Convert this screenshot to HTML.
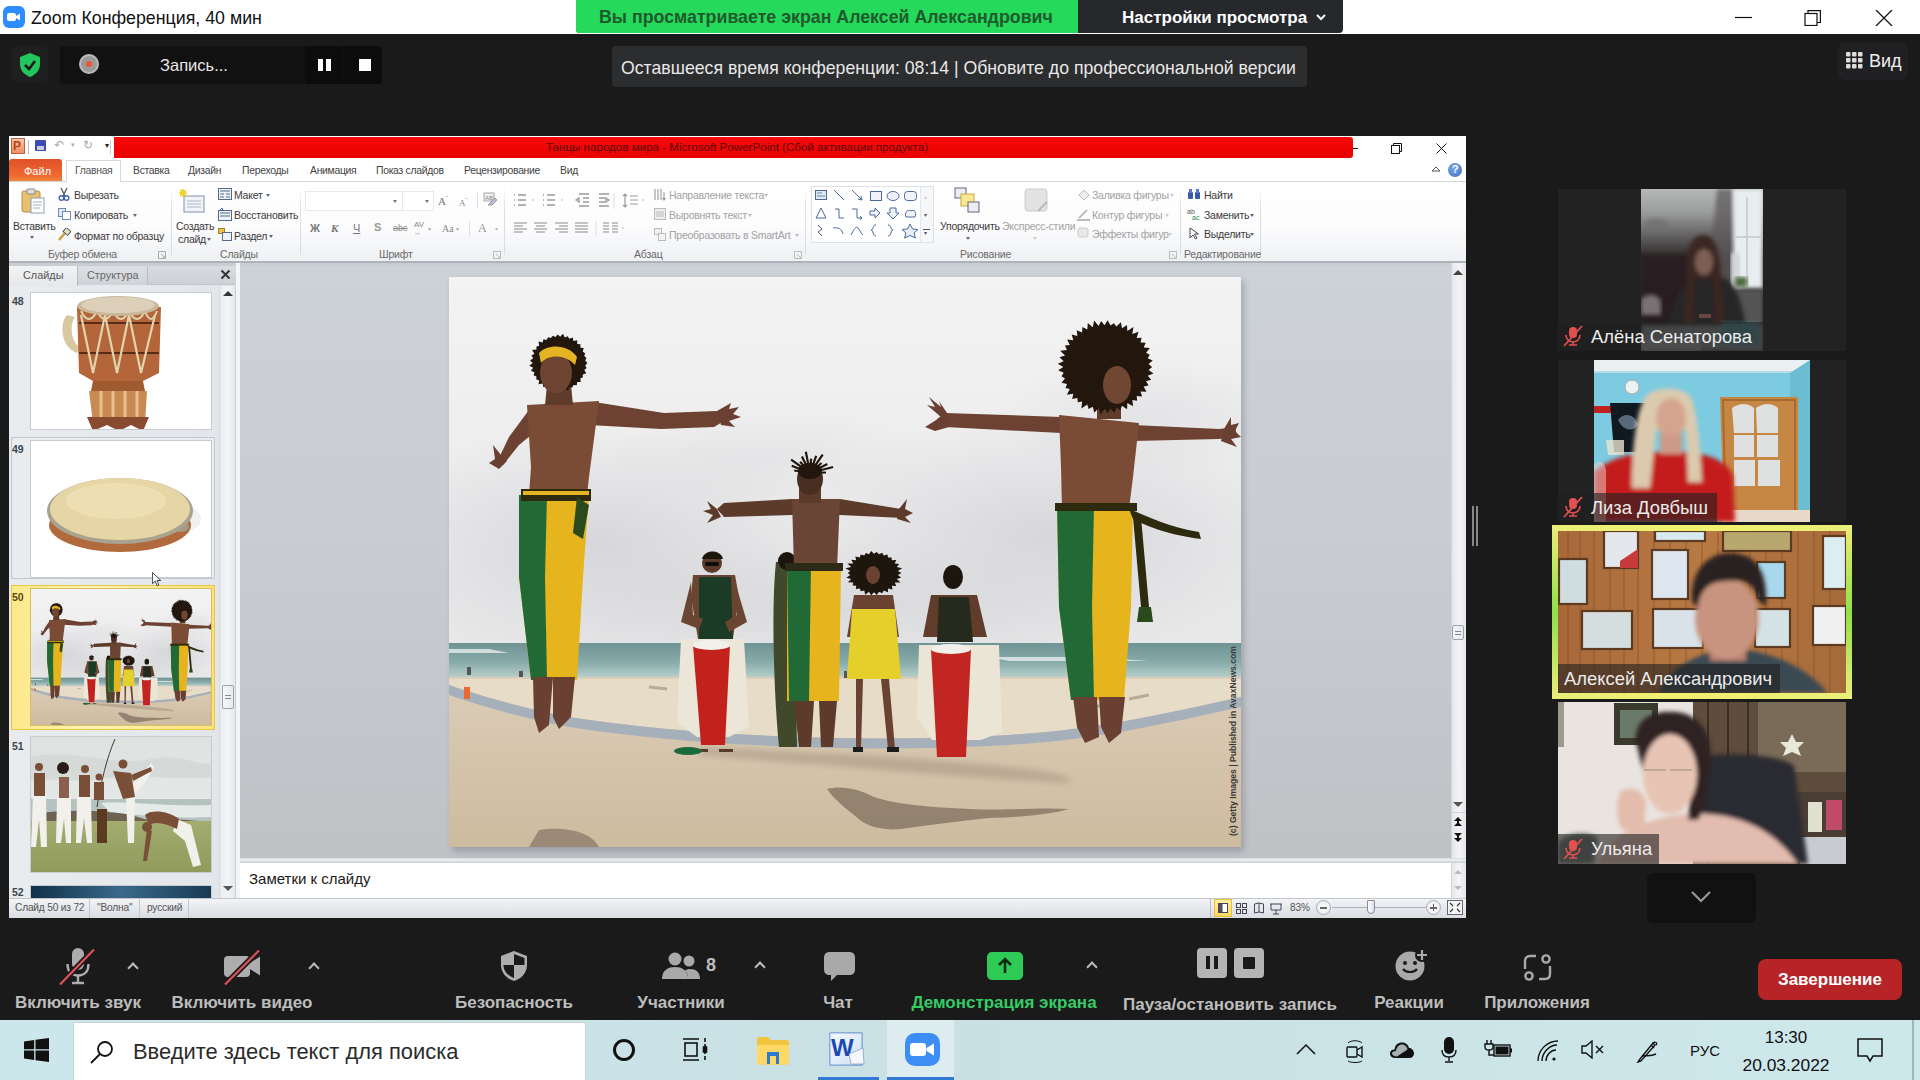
<!DOCTYPE html>
<html><head><meta charset="utf-8">
<style>
*{margin:0;padding:0;box-sizing:border-box}
html,body{width:1920px;height:1080px;overflow:hidden;background:#1a1a1a;font-family:"Liberation Sans",sans-serif}
.a{position:absolute}
.t{position:absolute;white-space:nowrap;line-height:1}
</style></head><body>
<!-- ============ ZOOM TITLE BAR ============ -->
<div class="a" style="left:0;top:0;width:1920px;height:34px;background:#fff"></div>
<div class="a" style="left:3px;top:6px;width:22px;height:22px;border-radius:6px;background:#2d8cff"></div>
<svg class="a" style="left:7px;top:12px" width="14" height="10" viewBox="0 0 14 10"><rect x="0" y="1" width="9" height="8" rx="2" fill="#fff"/><path d="M9 4 L13 1.5 V8.5 L9 6Z" fill="#fff"/></svg>
<div class="t" style="left:31px;top:10px;font-size:17.8px;color:#111">Zoom Конференция, 40 мин</div>

<div class="a" style="left:576px;top:0;width:767px;height:33px;border-radius:0 0 4px 4px;background:#26282c"></div>
<div class="a" style="left:576px;top:0;width:502px;height:33px;border-radius:0 0 0 4px;background:#25d95b"></div>
<div class="t" style="left:599px;top:9px;font-size:17.8px;font-weight:bold;color:#1f5a2c">Вы просматриваете экран Алексей Александрович</div>
<div class="t" style="left:1122px;top:9px;font-size:17px;font-weight:bold;color:#fff">Настройки просмотра</div>
<svg class="a" style="left:1315px;top:13px" width="12" height="8" viewBox="0 0 12 8"><path d="M2 2 L6 6 L10 2" stroke="#fff" stroke-width="2" fill="none"/></svg>

<svg class="a" style="left:1735px;top:10px" width="170" height="16" viewBox="0 0 170 16">
 <path d="M0 7.5 H17" stroke="#111" stroke-width="1.2"/>
 <rect x="70" y="3.5" width="12" height="12" fill="none" stroke="#111" stroke-width="1.2"/>
 <path d="M73 3.5 V0.6 H85.4 V12.5 H82" fill="none" stroke="#111" stroke-width="1.2"/>
 <path d="M141 0 L157 16 M157 0 L141 16" stroke="#111" stroke-width="1.3"/>
</svg>

<!-- ============ TOP CONTROLS ============ -->
<div class="a" style="left:12px;top:46px;width:36px;height:36px;border-radius:6px;background:#1f1f1f"></div>
<svg class="a" style="left:19px;top:52px" width="22" height="26" viewBox="0 0 22 26"><path d="M11 1 L21 5 V12 C21 19 16 23 11 25 C6 23 1 19 1 12 V5Z" fill="#22c55e"/><path d="M6 13 L10 17 L16 9" stroke="#1a1a1a" stroke-width="2.6" fill="none"/></svg>
<div class="a" style="left:60px;top:46px;width:322px;height:38px;border-radius:4px;background:#111"></div>
<div class="a" style="left:306px;top:46px;width:37px;height:38px;background:#0c0c0c"></div>
<div class="a" style="left:344px;top:46px;width:38px;height:38px;border-radius:0 4px 4px 0;background:#0c0c0c"></div>
<div class="a" style="left:79px;top:54px;width:20px;height:20px;border-radius:50%;background:#999;border:2px solid #bbb"></div>
<div class="a" style="left:86px;top:61px;width:6px;height:6px;border-radius:50%;background:#e53"></div>
<div class="t" style="left:160px;top:57px;font-size:16.5px;color:#e6e6e6">Запись...</div>
<div class="a" style="left:318px;top:59px;width:5px;height:12px;background:#fff"></div>
<div class="a" style="left:326px;top:59px;width:5px;height:12px;background:#fff"></div>
<div class="a" style="left:359px;top:59px;width:12px;height:12px;background:#fff"></div>

<div class="a" style="left:612px;top:46px;width:695px;height:41px;border-radius:4px;background:#2c2d2f"></div>
<div class="t" style="left:621px;top:60px;font-size:17.7px;color:#e8e8e8">Оставшееся время конференции: 08:14 | Обновите до профессиональной версии</div>

<div class="a" style="left:1838px;top:42px;width:70px;height:38px;border-radius:8px;background:#202022"></div>
<svg class="a" style="left:1846px;top:52px" width="17" height="17" viewBox="0 0 17 17" fill="#ddd"><rect x="0" y="0" width="4.5" height="4.5" rx="1"/><rect x="6" y="0" width="4.5" height="4.5" rx="1"/><rect x="12" y="0" width="4.5" height="4.5" rx="1"/><rect x="0" y="6" width="4.5" height="4.5" rx="1"/><rect x="6" y="6" width="4.5" height="4.5" rx="1"/><rect x="12" y="6" width="4.5" height="4.5" rx="1"/><rect x="0" y="12" width="4.5" height="4.5" rx="1"/><rect x="6" y="12" width="4.5" height="4.5" rx="1"/><rect x="12" y="12" width="4.5" height="4.5" rx="1"/></svg>
<div class="t" style="left:1869px;top:52px;font-size:18px;color:#eee">Вид</div>

<!-- ============ PPT WINDOW ============ -->

<div class="a" style="left:9px;top:136px;width:1457px;height:782px;background:#fff"></div>
<!-- title row -->
<div class="a" style="left:114px;top:137px;width:1239px;height:21px;border-radius:0 3px 3px 0;background:linear-gradient(#f80a0a,#e80000)"></div>
<div class="t" style="left:546px;top:141px;font-size:11.6px;color:#5a0808">Танцы народов мира  -  Microsoft PowerPoint (Сбой активации продукта)</div>
<div class="a" style="left:11px;top:138px;width:14px;height:16px;border:1px solid #c06040;background:linear-gradient(#f8c8a8,#f09060)"></div>
<div class="t" style="left:13px;top:140px;font-size:12px;font-weight:bold;color:#c04010">P</div>
<div class="a" style="left:28px;top:140px;width:1px;height:14px;background:#bbb"></div>
<div class="a" style="left:35px;top:140px;width:11px;height:11px;background:#3a4ab8;border-radius:1px"></div>
<div class="a" style="left:37px;top:146px;width:7px;height:4px;background:#ccd"></div>
<div class="t" style="left:54px;top:139px;font-size:12px;color:#aaa">↶</div>
<div class="t" style="left:71px;top:141px;font-size:7px;color:#aaa">▾</div>
<div class="t" style="left:83px;top:139px;font-size:12px;color:#aaa">↻</div>
<div class="a" style="left:110px;top:140px;width:1px;height:14px;background:#ccc"></div>
<div class="t" style="left:105px;top:142px;font-size:8px;color:#222">▾</div>
<div class="a" style="left:1353px;top:148px;width:5px;height:1px;background:#111"></div>
<svg class="a" style="left:1391px;top:143px" width="12" height="11" viewBox="0 0 12 11"><rect x="0.5" y="2.5" width="8" height="8" fill="none" stroke="#111"/><path d="M2.5 2.5 V0.5 H10.5 V8.5 H8.5" fill="none" stroke="#111"/></svg>
<svg class="a" style="left:1436px;top:143px" width="11" height="11" viewBox="0 0 11 11"><path d="M0.5 0.5 L10.5 10.5 M10.5 0.5 L0.5 10.5" stroke="#111" stroke-width="1"/></svg>
<!-- tabs row -->
<div class="a" style="left:9px;top:159px;width:53px;height:23px;border-radius:3px 3px 0 0;background:linear-gradient(#e05028,#f06830 70%,#f08a40)"></div>
<div class="t" style="left:24px;top:166px;font-size:11px;color:#fff">Файл</div>
<div class="a" style="left:66px;top:160px;width:55px;height:23px;background:#fff;border:1px solid #d6d8dc;border-bottom:none"></div>
<div class="a" style="left:9px;top:181px;width:1457px;height:1px;background:#d4d7dc"></div>
<div class="a" style="left:67px;top:180px;width:53px;height:3px;background:#fff"></div>
<div class="t" style="left:75px;top:166px;font-size:10.4px;letter-spacing:-0.3px;color:#555">Главная</div>
<div class="t" style="left:133px;top:166px;font-size:10.4px;letter-spacing:-0.3px;color:#444">Вставка</div>
<div class="t" style="left:188px;top:166px;font-size:10.4px;letter-spacing:-0.3px;color:#444">Дизайн</div>
<div class="t" style="left:242px;top:166px;font-size:10.4px;letter-spacing:-0.3px;color:#444">Переходы</div>
<div class="t" style="left:310px;top:166px;font-size:10.4px;letter-spacing:-0.3px;color:#444">Анимация</div>
<div class="t" style="left:376px;top:166px;font-size:10.4px;letter-spacing:-0.3px;color:#444">Показ слайдов</div>
<div class="t" style="left:464px;top:166px;font-size:10.4px;letter-spacing:-0.3px;color:#444">Рецензирование</div>
<div class="t" style="left:560px;top:166px;font-size:10.4px;letter-spacing:-0.3px;color:#444">Вид</div>
<svg class="a" style="left:1431px;top:165px" width="10" height="8" viewBox="0 0 10 8"><path d="M1 6 L5 2 L9 6 H1Z" fill="none" stroke="#555" stroke-width="1"/></svg>
<div class="a" style="left:1448px;top:163px;width:14px;height:14px;border-radius:50%;background:radial-gradient(circle at 40% 35%,#7aa8e8,#3a6cc0)"></div>
<div class="t" style="left:1452px;top:164px;font-size:11px;font-weight:bold;color:#fff">?</div>
<!-- ribbon -->
<div class="a" style="left:9px;top:182px;width:1457px;height:80px;background:linear-gradient(#fff 0%,#fcfcfd 55%,#eef0f3 100%)"></div>
<div class="a" style="left:9px;top:261px;width:1457px;height:2px;background:#aeb3ba"></div>

<style>
.r{position:absolute;white-space:nowrap;line-height:1;font-size:10.5px;letter-spacing:-0.25px;color:#3b3b3b}
.rg{color:#a2a2a2}
.gl{position:absolute;white-space:nowrap;line-height:1;font-size:10.5px;color:#6a6a6a;letter-spacing:-0.2px}
.sep{position:absolute;top:186px;width:1px;height:74px;background:linear-gradient(#fff,#dde0e4 30%,#d8dbe0 90%,#fff)}
.dd{position:absolute;width:0;height:0;border-left:2.5px solid transparent;border-right:2.5px solid transparent;border-top:3px solid #666}
</style>
<!-- clipboard group -->
<svg class="a" style="left:21px;top:188px" width="25" height="26" viewBox="0 0 25 26"><rect x="1" y="3" width="18" height="21" rx="2" fill="#e8c070" stroke="#b8904a"/><rect x="6" y="1" width="8" height="5" rx="1" fill="#ddd" stroke="#888"/><rect x="10" y="10" width="13" height="15" fill="#fff" stroke="#8aa0b8"/><path d="M12 14h9M12 17h9M12 20h7" stroke="#aab" stroke-width="1"/></svg>
<div class="r" style="left:13px;top:221px">Вставить</div>
<div class="dd" style="left:30px;top:236px"></div>
<svg class="a" style="left:58px;top:188px" width="12" height="13" viewBox="0 0 12 13"><path d="M3 0 L7 8 M9 0 L5 8" stroke="#556" stroke-width="1.3"/><circle cx="3.5" cy="10" r="2.3" fill="none" stroke="#4060b0" stroke-width="1.4"/><circle cx="8.5" cy="10" r="2.3" fill="none" stroke="#4060b0" stroke-width="1.4"/></svg>
<div class="r" style="left:74px;top:190px">Вырезать</div>
<svg class="a" style="left:58px;top:208px" width="13" height="12" viewBox="0 0 13 12"><rect x="0.5" y="0.5" width="7" height="8" fill="#dfe8f4" stroke="#6a8ab0"/><rect x="4.5" y="3.5" width="8" height="8" fill="#fff" stroke="#6a8ab0"/></svg>
<div class="r" style="left:74px;top:210px">Копировать</div>
<div class="dd" style="left:133px;top:214px"></div>
<svg class="a" style="left:58px;top:228px" width="13" height="13" viewBox="0 0 13 13"><path d="M1 12 L7 5" stroke="#c8a040" stroke-width="2.5"/><rect x="6" y="1" width="6" height="5" fill="#e8e0c0" stroke="#556" transform="rotate(40 9 3.5)"/></svg>
<div class="r" style="left:74px;top:231px">Формат по образцу</div>
<div class="sep" style="left:171px"></div>
<div class="gl" style="left:48px;top:249px">Буфер обмена</div>
<svg class="a" style="left:158px;top:251px" width="8" height="8" viewBox="0 0 8 8"><path d="M0.5 0.5H7.5V7.5H0.5Z M3 3 L7 7 M7 4.5 V7 H4.5" fill="none" stroke="#aaa" stroke-width="1"/></svg>
<!-- slides group -->
<svg class="a" style="left:178px;top:188px" width="28" height="26" viewBox="0 0 28 26"><rect x="6" y="8" width="20" height="16" fill="#f0f4f8" stroke="#8090a8"/><path d="M9 13h14M9 16h14M9 19h14" stroke="#b0b8c8"/><path d="M5 1 L5 9 M1 5 L9 5 M2 2 L8 8 M8 2 L2 8" stroke="#f0d020" stroke-width="1.6"/></svg>
<div class="r" style="left:176px;top:221px">Создать</div>
<div class="r" style="left:178px;top:234px">слайд</div>
<div class="dd" style="left:207px;top:238px"></div>
<svg class="a" style="left:218px;top:188px" width="14" height="12" viewBox="0 0 14 12"><rect x="0.5" y="0.5" width="13" height="11" fill="#eef2f8" stroke="#556a88"/><path d="M2 3h10M2 6h4M8 6h4M2 9h4M8 9h4" stroke="#556a88"/></svg>
<div class="r" style="left:234px;top:190px">Макет</div>
<div class="dd" style="left:266px;top:194px"></div>
<svg class="a" style="left:218px;top:208px" width="14" height="13" viewBox="0 0 14 13"><rect x="0.5" y="2.5" width="13" height="10" fill="#eef2f8" stroke="#556a88"/><path d="M2 5h10M2 8h10" stroke="#556a88"/><path d="M1 3 L4 0 L5 3" fill="none" stroke="#3a6ab0"/></svg>
<div class="r" style="left:234px;top:210px">Восстановить</div>
<svg class="a" style="left:218px;top:228px" width="14" height="13" viewBox="0 0 14 13"><rect x="0.5" y="0.5" width="6" height="5" fill="#f0c040" stroke="#a08030"/><rect x="4.5" y="4.5" width="9" height="8" fill="#eef2f8" stroke="#556a88"/></svg>
<div class="r" style="left:234px;top:231px">Раздел</div>
<div class="dd" style="left:269px;top:235px"></div>
<div class="sep" style="left:300px"></div>
<div class="gl" style="left:220px;top:249px">Слайды</div>
<!-- font group -->
<div class="a" style="left:305px;top:191px;width:98px;height:20px;border:1px solid #e6e8ec;background:#fff"></div>
<div class="a" style="left:402px;top:191px;width:32px;height:20px;border:1px solid #e6e8ec;background:#fff"></div>
<div class="dd" style="left:393px;top:200px;border-top-color:#777"></div>
<div class="dd" style="left:425px;top:200px;border-top-color:#777"></div>
<div class="t" style="left:438px;top:195px;font-size:11px;font-family:'Liberation Serif',serif;color:#777">A<sup style="font-size:6px">ˆ</sup></div>
<div class="t" style="left:459px;top:197px;font-size:9px;font-family:'Liberation Serif',serif;color:#888">A<sup style="font-size:6px">ˇ</sup></div>
<div class="a" style="left:477px;top:193px;width:1px;height:16px;background:#dde"></div>
<svg class="a" style="left:483px;top:192px" width="15" height="15" viewBox="0 0 15 15"><rect x="1" y="1" width="10" height="8" fill="#eee" stroke="#aaa"/><text x="2" y="8" font-size="6" fill="#888" font-family="Liberation Sans">AB</text><path d="M5 13 L12 6 L14 8 L9 13Z" fill="#c8b8d8" stroke="#999"/></svg>
<div class="t" style="left:310px;top:223px;font-size:11px;font-weight:bold;color:#777">Ж</div>
<div class="t" style="left:331px;top:223px;font-size:11px;font-style:italic;font-weight:bold;font-family:'Liberation Serif',serif;color:#777">К</div>
<div class="t" style="left:353px;top:223px;font-size:11px;text-decoration:underline;color:#777">Ч</div>
<div class="t" style="left:374px;top:222px;font-size:11px;font-weight:bold;color:#999">S</div>
<div class="t" style="left:393px;top:224px;font-size:9px;text-decoration:line-through;color:#888">abc</div>
<div class="t" style="left:414px;top:221px;font-size:8px;color:#888">AV</div>
<div class="t" style="left:414px;top:229px;font-size:7px;color:#999">↔</div>
<div class="t" style="left:428px;top:226px;font-size:6px;color:#aaa">▾</div>
<div class="t" style="left:442px;top:224px;font-size:10px;font-family:'Liberation Serif',serif;color:#888">Aa</div>
<div class="t" style="left:456px;top:226px;font-size:6px;color:#aaa">▾</div>
<div class="a" style="left:469px;top:221px;width:1px;height:16px;background:#dde"></div>
<div class="t" style="left:478px;top:222px;font-size:12px;font-family:'Liberation Serif',serif;color:#999">A</div>
<div class="t" style="left:495px;top:226px;font-size:6px;color:#bbb">▾</div>
<div class="sep" style="left:504px"></div>
<div class="gl" style="left:379px;top:249px">Шрифт</div>
<svg class="a" style="left:493px;top:251px" width="8" height="8" viewBox="0 0 8 8"><path d="M0.5 0.5H7.5V7.5H0.5Z M3 3 L7 7" fill="none" stroke="#bbb" stroke-width="1"/></svg>
<!-- paragraph group -->
<svg class="a" style="left:512px;top:192px" width="140" height="45" viewBox="0 0 140 45" stroke="#9a9a9a" fill="none">
 <path d="M2 3h1M2 8h1M2 13h1M6 3h8M6 8h8M6 13h8" stroke-width="1.4"/>
 <path d="M20 8 l2 0" stroke="#bbb"/>
 <path d="M31 3h1M31 8h1M31 13h1M35 3h8M35 8h8M35 13h8" stroke-width="1.4"/>
 <path d="M49 8 l2 0" stroke="#bbb"/>
 <path d="M67 2h10M71 6h6M71 10h6M67 14h10M64 8 l3 -2 v4z" stroke-width="1.3"/>
 <path d="M87 2h10M87 6h6M87 10h6M87 14h10M97 8 l-3 -2 v4z" stroke-width="1.3"/>
 <path d="M102 1 v16" stroke="#ddd"/>
 <path d="M113 2 v13 M111 4 l2 -2 2 2 M111 13 l2 2 2 -2 M118 4h8M118 8h8M118 12h8" stroke-width="1.2"/>
 <path d="M130 8 l2 0" stroke="#bbb"/>
 <path d="M2 31h13M2 34h9M2 37h13M2 40h9" stroke-width="1.15" stroke="#8a8a8a"/>
 <path d="M22 31h13M24 34h9M22 37h13M24 40h9" stroke-width="1.15" stroke="#8a8a8a"/>
 <path d="M43 31h13M47 34h9M43 37h13M47 40h9" stroke-width="1.15" stroke="#8a8a8a"/>
 <path d="M63 31h13M63 34h13M63 37h13M63 40h13" stroke-width="1.15" stroke="#8a8a8a"/>
 <path d="M84 29 v14" stroke="#ddd"/>
 <path d="M91 31h6M91 34h6M91 37h6M91 40h6M100 31h6M100 34h6M100 37h6M100 40h6" stroke-width="1.15" stroke="#8a8a8a"/>
 <path d="M110 36 l2 0" stroke="#bbb"/>
</svg>
<svg class="a" style="left:654px;top:188px" width="12" height="13" viewBox="0 0 12 13" stroke="#999" fill="none"><path d="M1 1v11M4 1v11M7 1v11M10 4v8M8.5 10 l1.5 2 1.5 -2" stroke-width="1.1"/></svg>
<div class="r rg" style="left:669px;top:190px">Направление текста</div>
<div class="dd" style="left:764px;top:194px;border-top-color:#bbb"></div>
<svg class="a" style="left:654px;top:208px" width="12" height="12" viewBox="0 0 12 12"><rect x="0.5" y="0.5" width="11" height="11" fill="#eee" stroke="#bbb"/><path d="M2 4h8M2 6h8M2 8h8" stroke="#bbb"/></svg>
<div class="r rg" style="left:669px;top:210px">Выровнять текст</div>
<div class="dd" style="left:748px;top:214px;border-top-color:#bbb"></div>
<svg class="a" style="left:654px;top:228px" width="12" height="13" viewBox="0 0 12 13"><rect x="0.5" y="0.5" width="7" height="6" fill="#eee" stroke="#bbb"/><rect x="4.5" y="5.5" width="7" height="7" fill="#f4f4f4" stroke="#bbb"/></svg>
<div class="r rg" style="left:669px;top:230px">Преобразовать в SmartArt</div>
<div class="dd" style="left:795px;top:234px;border-top-color:#bbb"></div>
<div class="sep" style="left:805px"></div>
<div class="gl" style="left:634px;top:249px">Абзац</div>
<svg class="a" style="left:794px;top:251px" width="8" height="8" viewBox="0 0 8 8"><path d="M0.5 0.5H7.5V7.5H0.5Z M3 3 L7 7" fill="none" stroke="#bbb" stroke-width="1"/></svg>
<!-- drawing group -->
<div class="a" style="left:811px;top:186px;width:123px;height:57px;border:1px solid #dde1e6;background:#fff"></div>
<div class="a" style="left:920px;top:187px;width:13px;height:55px;border-left:1px solid #e4e7ea;background:#f6f7f9"></div>
<div class="t" style="left:924px;top:194px;font-size:6px;color:#ccc">▴</div>
<div class="t" style="left:924px;top:212px;font-size:6px;color:#555">▾</div>
<div class="a" style="left:923px;top:229px;width:7px;height:1px;background:#555"></div>
<div class="t" style="left:924px;top:230px;font-size:6px;color:#555">▾</div>
<svg class="a" style="left:813px;top:187px" width="108" height="55" viewBox="0 0 108 55" fill="none" stroke="#4a6a9a" stroke-width="1">
 <rect x="2.5" y="3.5" width="11" height="9" fill="#e0e8f4"/><path d="M4 6h5M4 9h8" stroke="#6688aa"/>
 <path d="M21 3 L31 13"/>
 <path d="M39 3 L49 13 M49 13 l-4 -1 M49 13 l-1 -4"/>
 <rect x="57.5" y="4.5" width="11" height="9" fill="#f0f4fa"/>
 <ellipse cx="80" cy="9" rx="6" ry="4.5" fill="#f0f4fa"/>
 <rect x="91.5" y="4.5" width="12" height="9" rx="3" fill="#f0f4fa"/>
 <path d="M3 31 L8 21 L13 31Z"/>
 <path d="M22 22 H26 V31 H31"/>
 <path d="M39 22 H44 V31 H49 M47 29 l2 2 -2 2"/>
 <path d="M57 24 H62 V21 L67 26 L62 31 V28 H57Z" fill="#f0f4fa"/>
 <path d="M77 21 H83 V26 H86 L80 32 L74 26 H77Z" fill="#f0f4fa"/>
 <path d="M93 30 C91 25 95 22 98 24 C101 22 104 25 102 30Z" fill="#f0f4fa"/>
 <path d="M5 38 L9 42 L5 45 L9 49" stroke="#557"/>
 <path d="M20 41 C25 40 29 42 30 47"/>
 <path d="M38 48 C41 42 43 39 45 41 C47 43 48 47 50 48"/>
 <path d="M63 38 C59 38 61 43 58 43 C61 43 59 49 63 49"/>
 <path d="M75 38 C79 38 77 43 80 43 C77 43 79 49 75 49"/>
 <path d="M97 37 L99.5 42 L105 42.5 L101 46 L102.5 51 L97 48.5 L91.5 51 L93 46 L89 42.5 L94.5 42Z" fill="#e8eef8"/>
</svg>
<svg class="a" style="left:954px;top:187px" width="28" height="27" viewBox="0 0 28 27"><rect x="1" y="1" width="11" height="10" fill="#e8eef4" stroke="#667"/><rect x="7" y="7" width="13" height="12" fill="#f8e890" stroke="#c8a840"/><rect x="14" y="15" width="11" height="10" fill="#e8eef4" stroke="#667"/></svg>
<div class="r" style="left:940px;top:221px">Упорядочить</div>
<div class="dd" style="left:966px;top:237px"></div>
<svg class="a" style="left:1024px;top:188px" width="26" height="26" viewBox="0 0 26 26"><rect x="1" y="1" width="22" height="22" rx="3" fill="#e2e2e2" stroke="#ccc"/><path d="M14 23 L23 14" stroke="#bbb" stroke-width="2"/></svg>
<div class="r rg" style="left:1002px;top:221px">Экспресс-стили</div>
<div class="dd" style="left:1033px;top:237px;border-top-color:#ccc"></div>
<svg class="a" style="left:1077px;top:188px" width="13" height="13" viewBox="0 0 13 13"><path d="M2 7 L7 2 L12 7 L7 12Z" fill="#eee" stroke="#bbb"/></svg>
<div class="r rg" style="left:1092px;top:190px">Заливка фигуры</div>
<div class="dd" style="left:1170px;top:194px;border-top-color:#ccc"></div>
<svg class="a" style="left:1077px;top:208px" width="13" height="13" viewBox="0 0 13 13"><path d="M2 10 L10 2" stroke="#aaa" stroke-width="1.5"/><rect x="0" y="11" width="13" height="2" fill="#bbb"/></svg>
<div class="r rg" style="left:1092px;top:210px">Контур фигуры</div>
<div class="dd" style="left:1165px;top:214px;border-top-color:#ccc"></div>
<svg class="a" style="left:1077px;top:227px" width="13" height="13" viewBox="0 0 13 13"><rect x="1" y="1" width="10" height="9" rx="2" fill="#e8e8e8" stroke="#ccc"/></svg>
<div class="r rg" style="left:1092px;top:229px">Эффекты фигур</div>
<div class="dd" style="left:1168px;top:233px;border-top-color:#ccc"></div>
<div class="sep" style="left:1180px"></div>
<div class="gl" style="left:960px;top:249px">Рисование</div>
<svg class="a" style="left:1169px;top:251px" width="8" height="8" viewBox="0 0 8 8"><path d="M0.5 0.5H7.5V7.5H0.5Z M3 3 L7 7" fill="none" stroke="#bbb" stroke-width="1"/></svg>
<!-- editing group -->
<svg class="a" style="left:1187px;top:188px" width="14" height="12" viewBox="0 0 14 12"><rect x="1" y="4" width="5" height="7" rx="1" fill="#3a5aa8"/><rect x="8" y="4" width="5" height="7" rx="1" fill="#3a5aa8"/><rect x="2" y="1" width="3" height="4" fill="#5a7ac8"/><rect x="9" y="1" width="3" height="4" fill="#5a7ac8"/></svg>
<div class="r" style="left:1204px;top:190px">Найти</div>
<svg class="a" style="left:1187px;top:207px" width="14" height="14" viewBox="0 0 14 14"><text x="0" y="7" font-size="7" fill="#556" font-family="Liberation Sans">ab</text><text x="5" y="13" font-size="7" fill="#2a8a4a" font-family="Liberation Sans">ac</text></svg>
<div class="r" style="left:1204px;top:210px">Заменить</div>
<div class="dd" style="left:1250px;top:214px"></div>
<svg class="a" style="left:1189px;top:227px" width="11" height="13" viewBox="0 0 11 13"><path d="M1 1 L1 11 L4 8 L6.5 12 L8 11 L5.5 7 L9.5 7Z" fill="#fff" stroke="#445"/></svg>
<div class="r" style="left:1204px;top:229px">Выделить</div>
<div class="dd" style="left:1250px;top:233px"></div>
<div class="sep" style="left:1260px"></div>
<div class="gl" style="left:1184px;top:249px">Редактирование</div>




<!-- ============ SLIDES PANE ============ -->
<div class="a" style="left:9px;top:263px;width:1457px;height:3px;background:#c9cdd3"></div>
<div class="a" style="left:9px;top:266px;width:227px;height:632px;background:linear-gradient(90deg,#e9ecef,#e2e5e9)"></div>
<div class="a" style="left:9px;top:266px;width:227px;height:19px;background:linear-gradient(#d9dce1,#cdd1d6);border-bottom:1px solid #c2c6cc"></div>
<div class="a" style="left:9px;top:266px;width:69px;height:20px;background:linear-gradient(#f1f3f5,#e6e9ec);border-right:1px solid #b9bec5"></div>
<div class="a" style="left:78px;top:267px;width:70px;height:18px;background:linear-gradient(#dcdfe3,#cfd3d8);border-right:1px solid #b9bec5"></div>
<div class="t" style="left:23px;top:270px;font-size:10.9px;color:#555">Слайды</div>
<div class="t" style="left:87px;top:270px;font-size:10.9px;color:#666">Структура</div>
<svg class="a" style="left:220px;top:269px" width="11" height="11" viewBox="0 0 11 11"><path d="M1.5 1.5 L9.5 9.5 M9.5 1.5 L1.5 9.5" stroke="#333" stroke-width="2"/></svg>
<div class="a" style="left:219px;top:286px;width:17px;height:612px;background:linear-gradient(90deg,#e8ebee,#f2f4f6 50%,#e6e9ec);border-left:1px solid #d8dce0;border-right:1px solid #c9cdd2"></div>
<div class="a" style="left:223px;top:291px;width:0;height:0;border-left:5px solid transparent;border-right:5px solid transparent;border-bottom:5px solid #333"></div>
<div class="a" style="left:223px;top:886px;width:0;height:0;border-left:5px solid transparent;border-right:5px solid transparent;border-top:5px solid #555"></div>
<div class="a" style="left:222px;top:685px;width:12px;height:24px;border:1px solid #9aa3ad;border-radius:2px;background:linear-gradient(90deg,#f6f7f9,#e6e9ed)"></div>
<div class="a" style="left:225px;top:695px;width:6px;height:1px;background:#888"></div>
<div class="a" style="left:225px;top:698px;width:6px;height:1px;background:#888"></div>
<div class="a" style="left:236px;top:263px;width:4px;height:635px;background:#f4f5f7"></div>
<!-- selection frames -->
<div class="a" style="left:11px;top:437px;width:204px;height:142px;border:1px solid #c4c9cf;background:#eaedf0"></div>
<div class="a" style="left:11px;top:585px;width:204px;height:145px;border:1px solid #e8c840;background:linear-gradient(90deg,#fde88a,#fff3b8 40%,#fde27a)"></div>
<div class="t" style="left:12px;top:296px;font-size:10.5px;font-weight:bold;color:#3c4650">48</div>
<div class="t" style="left:12px;top:444px;font-size:10.5px;font-weight:bold;color:#3c4650">49</div>
<div class="t" style="left:12px;top:592px;font-size:10.5px;font-weight:bold;color:#5a4a10">50</div>
<div class="t" style="left:12px;top:741px;font-size:10.5px;font-weight:bold;color:#3c4650">51</div>
<div class="t" style="left:12px;top:887px;font-size:10.5px;font-weight:bold;color:#3c4650">52</div>
<div id="th48" class="a" style="left:30px;top:292px;width:182px;height:138px;background:#fff;border:1px solid #c8ccd2;overflow:hidden"><svg width="182" height="138" viewBox="0 0 182 138" style="display:block">
 <rect width="182" height="138" fill="#fff"/>
 <path d="M36 22 C28 30 30 55 46 60 L50 55 C40 50 38 32 44 24Z" fill="#d8c8a0"/>
 <path d="M46 14 L130 14 L128 80 L112 88 L62 88 L48 80Z" fill="#b4663a"/>
 <path d="M48 30 L128 30 M48 60 L128 60" stroke="#5a2a18" stroke-width="2"/>
 <path d="M50 22 L62 80 L74 22 L86 80 L98 22 L110 80 L124 22" stroke="#e2d4ac" stroke-width="2.2" fill="none"/>
 <path d="M50 18 Q58 34 66 18 Q74 34 82 18 Q90 34 98 18 Q106 34 114 18 Q120 34 126 18" stroke="#e2d4ac" stroke-width="2" fill="none"/>
 <ellipse cx="87" cy="13" rx="41" ry="10" fill="#c9b79a"/>
 <ellipse cx="87" cy="12" rx="37" ry="8" fill="#ddd0bb"/>
 <path d="M62 88 L112 88 L114 98 L60 98Z" fill="#a05a30"/>
 <path d="M58 98 L116 98 L114 130 L62 130Z" fill="#c98a52"/>
 <path d="M70 98 V128 M82 98 V128 M94 98 V128 M106 98 V128" stroke="#e8c090" stroke-width="3"/>
 <path d="M56 124 L118 124 L112 138 L100 132 L88 138 L76 132 L62 138Z" fill="#8a4a30"/>
</svg></div>
<div id="th49" class="a" style="left:30px;top:440px;width:182px;height:138px;background:#fff;border:1px solid #c8ccd2;overflow:hidden"><svg width="182" height="138" viewBox="0 0 182 138" style="display:block">
 <rect width="182" height="138" fill="#fff"/>
 <ellipse cx="94" cy="78" rx="76" ry="25" fill="#f0f0f0"/>
 <ellipse cx="89" cy="84" rx="71" ry="27" fill="#b06a3c"/>
 <ellipse cx="40" cy="83" rx="8" ry="5" fill="#c8c090"/>
 <ellipse cx="150" cy="86" rx="8" ry="5" fill="#a09a80"/>
 <ellipse cx="89" cy="70" rx="73" ry="33" fill="#a8a290"/>
 <ellipse cx="89" cy="68" rx="70" ry="31" fill="#e6d6a6"/>
 <ellipse cx="85" cy="60" rx="50" ry="18" fill="#efe2b8" opacity="0.7"/>
</svg></div>
<div id="th50" class="a" style="left:30px;top:588px;width:182px;height:138px;background:#ddd;border:1px solid #d8c060;overflow:hidden"><svg width="182" height="138" viewBox="0 0 792 570" preserveAspectRatio="none" style="display:block"><use href="#slideG"/></svg></div>
<div id="th51" class="a" style="left:30px;top:736px;width:182px;height:137px;background:#ccc;border:1px solid #c8ccd2;overflow:hidden"><svg width="182" height="137" viewBox="0 0 182 137" style="display:block">
 <defs><linearGradient id="s51" x1="0" y1="0" x2="0" y2="1"><stop offset="0" stop-color="#dde2e0"/><stop offset="1" stop-color="#eceeec"/></linearGradient>
 <linearGradient id="g51" x1="0" y1="0" x2="0" y2="1"><stop offset="0" stop-color="#a4ac70"/><stop offset="1" stop-color="#8e9a5c"/></linearGradient>
 <filter id="b51"><feGaussianBlur stdDeviation="0.6"/></filter></defs>
 <rect width="182" height="137" fill="url(#s51)"/>
 <path d="M0 20 C40 10 80 30 120 22 C150 16 170 30 182 26 V40 C150 44 110 36 70 42 C40 46 20 40 0 44Z" fill="#d0d6d4" opacity="0.7"/>
 <rect y="62" width="182" height="22" fill="#b4c2c0"/>
 <path d="M70 66 C100 64 140 70 182 68 V80 C150 82 110 78 80 76Z" fill="#e4eae8"/>
 <path d="M10 76 C40 72 80 74 100 78 L120 84 C150 80 170 86 182 84 V90 H10Z" fill="#6e6250"/>
 <rect y="84" width="182" height="53" fill="url(#g51)"/>
 <path d="M84 2 C76 20 70 45 66 70" stroke="#4a3a2a" stroke-width="1" fill="none"/>
 <g filter="url(#b51)">
 <g fill="#f2f0ea">
  <path d="M2 58 L15 58 L16 110 L10 110 L8 82 L5 110 L0 110Z"/>
  <path d="M26 60 L40 60 L40 106 L35 106 L33 82 L30 106 L25 106Z"/>
  <path d="M46 60 L60 60 L61 106 L56 106 L53 82 L50 106 L45 106Z"/>
  <path d="M103 58 L114 46 L123 30 L120 26 L109 40 L98 52Z"/>
  <path d="M95 60 L104 58 L103 106 L97 106Z"/>
  <path d="M146 82 L160 88 L170 128 L162 130 L154 104 L142 94Z"/>
 </g>
 <g fill="#7a5038">
  <circle cx="8" cy="30" r="4"/><path d="M3 36 h11 v23 h-11z"/>
  <circle cx="32" cy="31" r="6" fill="#2a1c14"/><path d="M28 40 h10 v21 h-10z" fill="#8a6050"/>
  <circle cx="54" cy="32" r="4"/><path d="M48 38 h11 v22 h-11z"/>
  <circle cx="68" cy="40" r="3.5"/><path d="M63 45 h10 v18 h-10z"/>
  <circle cx="92" cy="27" r="4.5"/><path d="M82 34 L100 36 L104 60 L92 62Z"/>
  <path d="M100 38 L120 30 L121 34 L102 44Z"/>
  <path d="M114 78 C120 72 138 74 148 82 L146 92 C134 86 124 84 118 88Z"/>
  <circle cx="116" cy="90" r="5"/>
  <path d="M116 92 L112 124 L116 124 L121 94Z"/>
 </g>
 <path d="M66 72 h10 v34 h-10z" fill="#5a3a22"/>
 </g>
</svg></div>
<div class="a" style="left:30px;top:885px;width:182px;height:13px;background:linear-gradient(90deg,#10304a,#3a6a8a 50%,#183a55);border:1px solid #c8ccd2;border-bottom:none"></div>

<svg class="a" style="left:152px;top:572px" width="10" height="15" viewBox="0 0 12 18"><path d="M0.5 0.5 L0.5 14 L3.8 11 L6.2 16.5 L8.2 15.6 L5.9 10.2 L10.5 10.2Z" fill="#fff" stroke="#222" stroke-width="1"/></svg>
<!-- ============ MAIN SLIDE AREA ============ -->
<div class="a" style="left:240px;top:266px;width:1211px;height:593px;background:linear-gradient(#cdd1d8,#c9ccd2 45%,#bfc1c5)"></div>
<div class="a" style="left:452px;top:280px;width:792px;height:571px;background:rgba(90,95,105,0.35);filter:blur(3px)"></div>
<div id="slide" class="a" style="left:449px;top:277px;width:792px;height:570px;background:#eee;overflow:hidden">
<svg width="792" height="570" viewBox="0 0 792 570" style="display:block">
 <defs>
  <linearGradient id="sky" x1="0" y1="0" x2="0" y2="1"><stop offset="0" stop-color="#f3f3f4"/><stop offset="0.45" stop-color="#ebebec"/><stop offset="1" stop-color="#e2e3e4"/></linearGradient>
  <radialGradient id="cl1" cx="0.5" cy="0.5" r="0.5"><stop offset="0" stop-color="#cdced2" stop-opacity="0.68"/><stop offset="1" stop-color="#cdced2" stop-opacity="0"/></radialGradient>
  <linearGradient id="sea" x1="0" y1="0" x2="0" y2="1"><stop offset="0" stop-color="#6f9394"/><stop offset="0.5" stop-color="#86aaa8"/><stop offset="1" stop-color="#c0d4d0"/></linearGradient>
  <linearGradient id="sand" x1="0" y1="0" x2="0" y2="1"><stop offset="0" stop-color="#dccdb8"/><stop offset="1" stop-color="#cdbb9f"/></linearGradient>
  <filter id="bl" x="-20%" y="-20%" width="140%" height="140%"><feGaussianBlur stdDeviation="3"/></filter>
  <filter id="bl1"><feGaussianBlur stdDeviation="0.7"/></filter>
 </defs>
 <g id="slideG">
 <rect width="792" height="570" fill="url(#sky)"/>
 <ellipse cx="150" cy="270" rx="240" ry="120" fill="url(#cl1)"/>
 <ellipse cx="600" cy="260" rx="260" ry="120" fill="url(#cl1)"/>
 <ellipse cx="380" cy="330" rx="300" ry="70" fill="url(#cl1)" opacity="0.8"/>
 <ellipse cx="700" cy="140" rx="160" ry="60" fill="url(#cl1)" opacity="0.5"/>
 <ellipse cx="320" cy="180" rx="160" ry="50" fill="url(#cl1)" opacity="0.4"/>
 <rect x="0" y="366" width="792" height="37" fill="url(#sea)"/>
 <path d="M0 372 H40 L60 376 H0Z M540 380 H640 L700 384 H560Z" fill="#e8eeee" opacity="0.8"/>
 <rect x="0" y="400" width="792" height="170" fill="url(#sand)"/>
 <path d="M0 402 H792 V420 C700 440 650 452 560 458 C420 466 250 460 120 440 C60 428 20 415 0 408Z" fill="#e7dcc8"/>
 <path d="M0 408 C20 415 60 428 120 440 C250 460 420 466 560 458 C650 452 700 440 792 420 V430 C700 450 650 462 560 468 C420 476 250 470 120 450 C60 438 20 425 0 418Z" fill="#a6b0ba"/>
 <path d="M200 410 L218 412 M235 427 L255 430 M268 440 L290 443" stroke="#b9ab96" stroke-width="3"/>
 <path d="M640 430 L660 428 M680 422 L700 418" stroke="#b9ab96" stroke-width="3"/>
 <!-- distant people on beach -->
 <path d="M18 398 h4 v-8 h-4z M70 400 h4 v-6 h-4z M380 400 h3 v-6 h-3z M395 401 h3 v-7 h-3z M415 400 h3 v-5 h-3z" fill="#555"/>
 <rect x="15" y="410" width="6" height="12" fill="#e86a30"/>
 <!-- shadows -->
 <path d="M378 512 C392 508 410 512 425 520 C450 528 480 530 520 532 C560 534 590 530 620 532 C600 538 570 540 540 541 C510 544 480 548 452 552 C430 554 415 548 405 538 C395 530 385 522 378 512Z" fill="#847462" opacity="0.8" filter="url(#bl1)"/>
 <path d="M250 470 C300 472 360 476 420 478 C470 482 520 486 560 490 C600 494 630 500 620 506 C580 504 520 500 470 496 C400 490 320 484 250 478Z" fill="#9a8a76" opacity="0.45" filter="url(#bl)"/>
 <path d="M90 553 C110 550 140 552 150 570 H80Z" fill="#857565" opacity="0.7" filter="url(#bl1)"/>
 <g filter="url(#bl1)">
 <!-- back person green pants -->
 <path d="M327 285 L345 282 L348 470 L330 470 C325 420 322 330 327 285Z" fill="#3f4a2c"/>
 <circle cx="338" cy="284" r="9" fill="#1a120c"/>
 <!-- drummer left -->
 <circle cx="263" cy="286" r="10" fill="#5a3a2a"/><path d="M253 282 C255 272 272 272 274 282Z" fill="#1e1510"/><rect x="256" y="285" width="14" height="4" rx="1.5" fill="#111"/>
 <path d="M244 298 L286 298 L290 320 L283 368 L250 368 L242 320Z" fill="#6a4532"/>
 <path d="M250 300 L282 300 L284 365 L250 365Z" fill="#1f3a26"/>
 <path d="M242 305 L232 345 L250 352 L254 342 L244 338Z" fill="#6a4532"/>
 <path d="M286 305 L298 345 L280 355 L276 345 L288 338Z" fill="#6a4532"/>
 <path d="M232 362 L295 362 L300 450 L280 460 L248 460 L228 445Z" fill="#ece6d8"/>
 <path d="M244 368 L281 368 L276 468 L252 468Z" fill="#c3231f"/>
 <ellipse cx="262.5" cy="368" rx="19" ry="5" fill="#f2f0ea"/>
 <path d="M245 472 h14 v3 h-14z M270 472 h14 v3 h-14z" fill="#5a3a2a"/>
 <ellipse cx="239" cy="474" rx="14" ry="4" fill="#1f6a3a"/>
 <!-- woman in yellow -->
 <path d="M452.5 296.0 L448.8 298.0 L452.2 300.6 L447.8 301.9 L451.5 305.4 L445.7 305.6 L447.3 308.9 L442.8 308.8 L443.5 312.4 L439.1 311.5 L439.0 315.3 L434.7 313.5 L433.2 316.3 L430.0 314.7 L427.9 318.0 L425.0 315.2 L422.1 318.3 L420.0 314.7 L416.2 317.7 L415.3 313.5 L411.8 314.3 L410.9 311.5 L406.9 312.1 L407.2 308.8 L403.7 308.4 L404.3 305.6 L398.9 305.3 L402.2 301.9 L397.4 300.7 L401.2 298.0 L398.8 296.0 L401.2 294.0 L396.5 291.2 L402.2 290.1 L398.4 286.5 L404.3 286.4 L402.3 282.8 L407.2 283.2 L406.3 279.4 L410.9 280.5 L411.7 277.6 L415.3 278.5 L416.9 276.1 L420.0 277.3 L422.1 273.9 L425.0 276.8 L427.7 275.1 L430.0 277.3 L433.2 275.7 L434.7 278.5 L438.4 277.4 L439.1 280.5 L442.5 280.5 L442.8 283.2 L447.3 283.1 L445.7 286.4 L450.1 287.1 L447.8 290.1 L453.1 291.2 L448.8 294.0Z" fill="#1c130d"/>
 <ellipse cx="424" cy="298" rx="7" ry="9" fill="#6a4232"/>
 <path d="M405 318 L444 318 L450 360 L398 360Z" fill="#6a4232"/>
 <path d="M403 332 L446 332 L452 402 L398 402Z" fill="#e5cf2a"/>
 <path d="M407 402 L414 402 L412 472 L407 472Z M432 402 L440 402 L446 472 L439 472Z" fill="#6a4232"/>
 <path d="M404 470 h10 v5 h-10z M438 470 h12 v5 h-12z" fill="#1a1a1a"/>
 <!-- drummer right -->
 <ellipse cx="504" cy="300" rx="10" ry="12" fill="#1e1510"/>
 <path d="M482 318 L528 318 L538 360 L474 360Z" fill="#5e3e2c"/>
 <path d="M490 320 L520 320 L524 365 L488 365Z" fill="#262a1c"/>
 <path d="M470 368 L550 368 L553 455 L532 463 L483 463 L468 440Z" fill="#ebe5d6"/>
 <path d="M482 372 L522 372 L517 480 L488 480Z" fill="#c12520"/>
 <ellipse cx="502" cy="372" rx="20" ry="5" fill="#f2f0ea"/>
 <!-- middle dancer -->
 <path d="M268 232 L275 226 L343 222 L391 222 L452 232 L455 241 L391 238 L343 238 L275 240Z" fill="#5b3a2b"/>
 <path d="M343 222 L391 222 L388 292 L345 292Z" fill="#6a4434"/>
 <path d="M350 204 L372 204 L372 226 L350 226Z" fill="#5b3a2b"/>
 <ellipse cx="361" cy="202" rx="13" ry="16" fill="#4a2e22"/>
 <path d="M361 196 L345.2 193.5 M361 196 L342.7 188.7 M361 196 L342.1 182.7 M361 196 L351.1 184.7 M361 196 L352.9 179.6 M361 196 L356.8 174.7 M361 196 L362.1 181.6 M361 196 L367.2 178.9 M361 196 L373.7 177.7 M361 196 L372.5 186.0 M361 196 L378.3 187.0 M361 196 L384.1 190.0 M361 196 L377.0 195.5" stroke="#22160f" stroke-width="2.2" fill="none"/><ellipse cx="361" cy="194" rx="12" ry="8" fill="#22160f"/>
 <path d="M338 288 L392 288 L390 424 L338 424Z" fill="#e6b41e"/>
 <path d="M338 288 L362 288 L360 424 L340 424Z" fill="#226b34"/>
 <path d="M336 286 H394 V294 H336Z" fill="#2a2a12"/>
 <path d="M345 424 L365 424 L362 470 L350 470Z M370 424 L388 424 L384 470 L372 470Z" fill="#5b3a2b"/>
 <!-- left dancer -->
 <path d="M145 125 L215 136 L268 134 L280 141 L265 150 L212 152 L140 148Z" fill="#6e4331"/>
 <path d="M80 133 L60 160 L48 185 L54 188 L70 168 L92 150Z" fill="#6e4331"/>
 <path d="M78 128 L150 124 L140 200 L138 218 L80 218 L82 190Z" fill="#7a4b35"/>
 <path d="M98 108 L122 108 L124 128 L96 128Z" fill="#5f3a2a"/>
 <path d="M138.4 86.0 L136.2 88.4 L137.6 91.0 L135.3 93.0 L137.3 96.2 L133.7 97.4 L133.9 100.3 L131.3 101.4 L131.8 105.0 L128.2 105.0 L127.8 108.3 L124.5 107.9 L123.2 110.5 L120.3 110.2 L118.9 113.4 L115.8 111.6 L113.7 113.6 L111.2 112.2 L108.7 114.6 L106.5 112.0 L103.8 113.2 L101.9 111.0 L99.0 111.7 L97.6 109.1 L94.2 109.9 L93.6 106.5 L89.6 107.3 L90.2 103.3 L87.3 102.5 L87.4 99.5 L84.6 98.2 L85.4 95.2 L81.9 93.7 L84.2 90.7 L80.3 88.7 L83.7 86.0 L81.1 83.4 L84.2 81.3 L82.4 78.4 L85.4 76.8 L83.1 73.0 L87.4 72.5 L87.5 69.6 L90.2 68.7 L89.5 64.6 L93.6 65.5 L94.4 62.3 L97.6 62.9 L99.0 60.2 L101.9 61.0 L103.8 58.7 L106.5 60.0 L108.7 57.6 L111.2 59.8 L114.0 56.8 L115.8 60.4 L118.7 59.3 L120.3 61.8 L123.7 60.5 L124.5 64.1 L128.2 63.2 L128.2 67.0 L131.5 67.2 L131.3 70.6 L134.8 71.2 L133.7 74.6 L136.1 76.2 L135.3 79.0 L137.4 81.0 L136.2 83.6Z" fill="#22160f"/>
 <ellipse cx="107" cy="96" rx="16" ry="20" fill="#6e4430"/>
 <path d="M90 76 C100 66 120 68 128 80 L126 88 C118 78 100 76 92 86Z" fill="#e4b420"/>
 <path d="M70 218 L140 218 L134 300 L128 403 L82 403 L70 300Z" fill="#e6b41e"/>
 <path d="M70 218 L98 218 L96 300 L98 403 L82 403 L70 300Z" fill="#236b34"/>
 <path d="M72 212 H142 V224 H72Z" fill="#2d2a10"/>
 <path d="M74 214 H140 V218 H74Z" fill="#e4b420"/>
 <path d="M128 220 L140 228 L134 262 L124 256Z" fill="#2a4a1a"/>
 <path d="M84 400 L104 400 L100 448 L90 456 L85 440Z M104 400 L126 400 L122 440 L110 452 L104 440Z" fill="#6a4030"/>
 <!-- right dancer -->
 <path d="M488 142 L496 136 L612 140 L612 156 L496 150 L486 150Z" fill="#6e4331"/>
 <path d="M684 148 L770 152 L786 150 L788 160 L770 162 L684 164Z" fill="#6e4331"/>
 <path d="M610 138 L690 146 L684 200 L680 232 L613 232 L612 190Z" fill="#7a4b35"/>
 <path d="M648 118 L672 118 L672 142 L648 142Z" fill="#5f3a2a"/>
 <path d="M703.1 90.0 L699.6 92.9 L704.5 96.5 L698.7 98.7 L702.2 102.7 L697.1 104.3 L699.5 108.5 L694.7 109.6 L697.4 114.7 L691.5 114.5 L693.1 119.6 L687.7 119.0 L688.1 123.8 L683.3 122.9 L684.1 129.3 L678.3 126.1 L678.1 132.2 L673.0 128.7 L671.3 133.0 L667.3 130.5 L665.3 135.8 L661.5 131.5 L658.7 136.3 L655.5 131.7 L651.9 137.4 L649.6 131.1 L645.3 135.7 L643.8 129.7 L639.6 132.1 L638.3 127.5 L632.4 131.6 L633.1 124.6 L628.8 125.3 L628.4 121.0 L623.2 121.9 L624.3 116.8 L617.9 117.8 L620.8 112.1 L616.5 111.1 L618.0 107.0 L612.6 105.8 L616.0 101.5 L612.5 99.2 L614.7 95.8 L609.2 93.3 L614.3 90.0 L608.8 86.7 L614.7 84.2 L610.5 80.3 L616.0 78.5 L611.2 73.7 L618.0 73.0 L615.9 68.6 L620.8 67.9 L618.1 62.4 L624.3 63.2 L622.7 57.6 L628.4 59.0 L627.7 53.3 L633.1 55.4 L633.4 50.1 L638.3 52.5 L638.8 45.9 L643.8 50.3 L645.1 43.5 L649.6 48.9 L652.1 44.1 L655.5 48.3 L658.7 43.2 L661.5 48.5 L664.9 46.2 L667.3 49.5 L671.9 45.3 L673.0 51.3 L678.0 47.9 L678.3 53.9 L684.5 50.1 L683.3 57.1 L689.5 54.7 L687.7 61.0 L692.6 60.8 L691.5 65.5 L696.7 65.7 L694.7 70.4 L700.8 70.9 L697.1 75.7 L700.7 77.8 L698.7 81.3 L703.7 83.6 L699.6 87.1Z" fill="#22160f"/>
 <ellipse cx="668" cy="108" rx="14" ry="19" fill="#704632"/>
 <path d="M608 228 L684 228 L682 330 L675 423 L622 423 L610 330Z" fill="#e6b41e"/>
 <path d="M608 228 L645 228 L643 330 L645 423 L622 423 L610 330Z" fill="#236b34"/>
 <path d="M606 226 H688 V234 H606Z" fill="#2d2a10"/>
 <path d="M680 232 C700 240 720 250 750 255 L752 262 C720 258 700 250 684 242Z" fill="#2d2a10"/>
 <path d="M684 240 L692 330 L700 330 L692 240Z" fill="#2d2a10"/>
 <path d="M690 330 L702 330 L704 345 L688 345Z" fill="#2a4a1a"/>
 <path d="M624 420 L648 420 L650 460 L636 466 L628 450Z M650 420 L676 420 L672 456 L660 466 L652 450Z" fill="#6a4030"/>

 <path d="M268 134 L282 126 L280 132 L290 130 L284 137 L292 140 L280 144 L286 150 L272 148Z" fill="#6a4030"/>
 <path d="M492 140 L478 128 L486 130 L480 120 L492 130 L490 124 L498 136 L500 150 L486 154 L476 150Z" fill="#6a4030"/>
 <path d="M775 152 L782 140 L782 148 L790 146 L786 154 L792 160 L782 162 L788 170 L772 164Z" fill="#6a4030"/>
 <path d="M52 178 L44 168 L46 182 L40 186 L50 192 L58 184Z" fill="#6a4030"/>
 <path d="M268 232 L258 224 L262 232 L254 234 L264 238 L258 246 L272 240Z" fill="#5b3a2b"/>
 <path d="M450 232 L458 222 L456 232 L464 236 L456 240 L462 246 L448 242Z" fill="#5b3a2b"/>
 </g>
 <text transform="translate(786.5 559) rotate(-90)" font-family="Liberation Sans" font-size="8.6" font-weight="bold" fill="#3a3a3a">(c) Getty Images | Published in AvaxNews.com</text>
 </g>
</svg>
</div>
<!-- right scrollbar -->
<div class="a" style="left:1451px;top:263px;width:15px;height:596px;background:linear-gradient(90deg,#e4e7eb,#f3f4f6 50%,#e4e7eb);border-left:1px solid #d2d6db"></div>
<div class="a" style="left:1453px;top:270px;width:0;height:0;border-left:5px solid transparent;border-right:5px solid transparent;border-bottom:5px solid #444"></div>
<div class="a" style="left:1453px;top:802px;width:0;height:0;border-left:5px solid transparent;border-right:5px solid transparent;border-top:5px solid #555"></div>
<div class="a" style="left:1452px;top:625px;width:12px;height:15px;border:1px solid #9aa3ad;border-radius:2px;background:linear-gradient(90deg,#f6f7f9,#e6e9ed)"></div>
<div class="a" style="left:1455px;top:631px;width:6px;height:1px;background:#888"></div>
<div class="a" style="left:1455px;top:634px;width:6px;height:1px;background:#888"></div>
<div class="a" style="left:1451px;top:812px;width:15px;height:1px;background:#d2d6db"></div>
<svg class="a" style="left:1453px;top:816px" width="10" height="28" viewBox="0 0 10 28" fill="#111"><path d="M1 5 L5 1 L9 5Z M1 10 L5 6 L9 10Z"/><rect x="4" y="5" width="2" height="5"/><path d="M1 17 L5 21 L9 17Z M1 22 L5 26 L9 22Z"/><rect x="4" y="17" width="2" height="5"/></svg>
<!-- notes -->
<div class="a" style="left:240px;top:858px;width:1226px;height:5px;background:linear-gradient(#d6d9de,#eef0f2 40%,#c7cbd1)"></div>
<div class="a" style="left:240px;top:863px;width:1211px;height:35px;background:#fff"></div>
<div class="t" style="left:249px;top:871px;font-size:15px;color:#1a1a1a">Заметки к слайду</div>
<div class="a" style="left:1451px;top:863px;width:15px;height:35px;background:linear-gradient(90deg,#e4e7eb,#f3f4f6 50%,#e4e7eb);border-left:1px solid #d2d6db"></div>
<div class="a" style="left:1454px;top:870px;width:0;height:0;border-left:4px solid transparent;border-right:4px solid transparent;border-bottom:4px solid #bbb"></div>
<div class="a" style="left:1454px;top:886px;width:0;height:0;border-left:4px solid transparent;border-right:4px solid transparent;border-top:4px solid #bbb"></div>
<!-- status bar -->
<div class="a" style="left:9px;top:898px;width:1457px;height:20px;background:linear-gradient(#f3f4f6,#e3e6ea 60%,#d9dce1);border-top:1px solid #c2c6cc"></div>
<div class="t" style="left:15px;top:903px;font-size:10.2px;letter-spacing:-0.2px;color:#555">Слайд 50 из 72</div>
<div class="a" style="left:89px;top:899px;width:1px;height:19px;background:#c4c8ce"></div>
<div class="t" style="left:97px;top:903px;font-size:10.2px;letter-spacing:-0.2px;color:#555">"Волна"</div>
<div class="a" style="left:139px;top:899px;width:1px;height:19px;background:#c4c8ce"></div>
<div class="t" style="left:147px;top:903px;font-size:10.2px;letter-spacing:-0.2px;color:#555">русский</div>
<div class="a" style="left:188px;top:899px;width:1px;height:19px;background:#c4c8ce"></div>
<div class="a" style="left:1210px;top:899px;width:1px;height:19px;background:#b8bcc2"></div>
<div class="a" style="left:1214px;top:899px;width:18px;height:18px;border:1px solid #e8c040;background:linear-gradient(#fff0a0,#fcd860)"></div>
<svg class="a" style="left:1216px;top:901px" width="70" height="14" viewBox="0 0 70 14" fill="none" stroke="#445">
 <rect x="2.5" y="2.5" width="9" height="9" fill="#fff"/><rect x="3" y="3" width="3" height="8" fill="#556"/>
 <rect x="20.5" y="2.5" width="4" height="4"/><rect x="26.5" y="2.5" width="4" height="4"/><rect x="20.5" y="8.5" width="4" height="4"/><rect x="26.5" y="8.5" width="4" height="4"/>
 <path d="M38.5 3 L43 2 L47.5 3 V12 L43 11 L38.5 12Z M43 2 V11"/>
 <path d="M54 3 H66 M55 3 V9 H65 V3 M60 9 V13 M57 13 H63"/>
</svg>
<div class="t" style="left:1290px;top:903px;font-size:10px;color:#555">83%</div>
<div class="a" style="left:1316px;top:900px;width:15px;height:15px;border-radius:50%;border:1px solid #aab;background:radial-gradient(#fff,#e4e7ea)"></div>
<div class="a" style="left:1320px;top:907px;width:7px;height:1.5px;background:#666"></div>
<div class="a" style="left:1332px;top:907px;width:94px;height:1px;background:#b0b4ba"></div>
<div class="a" style="left:1367px;top:900px;width:8px;height:14px;border:1px solid #889;border-radius:1px 1px 4px 4px;background:linear-gradient(90deg,#fff,#dde)"></div>
<div class="a" style="left:1426px;top:900px;width:15px;height:15px;border-radius:50%;border:1px solid #aab;background:radial-gradient(#fff,#e4e7ea)"></div>
<div class="a" style="left:1430px;top:907px;width:7px;height:1.5px;background:#666"></div>
<div class="a" style="left:1432.8px;top:904px;width:1.5px;height:7px;background:#666"></div>
<svg class="a" style="left:1447px;top:900px" width="16" height="15" viewBox="0 0 16 15"><rect x="0.5" y="0.5" width="15" height="14" fill="#f4f5f7" stroke="#667"/><path d="M3 3 L6 6 M13 3 L10 6 M3 12 L6 9 M13 12 L10 9" stroke="#333" stroke-width="1.2"/></svg>

<!-- ============ PARTICIPANTS ============ -->

<style>
.nm{position:absolute;white-space:nowrap;line-height:1;font-size:18.4px;color:#ececec}
.lb{position:absolute;background:rgba(32,32,32,0.6)}
</style>
<!-- splitter -->
<div class="a" style="left:1472px;top:506px;width:2px;height:40px;background:#888"></div>
<div class="a" style="left:1476px;top:506px;width:2px;height:40px;background:#888"></div>
<!-- tile 1 Alena -->
<div class="a" style="left:1558px;top:189px;width:288px;height:162px;background:#222"></div>
<svg class="a" style="left:1641px;top:189px" width="122" height="162" viewBox="0 0 122 162">
 <defs><linearGradient id="al1" x1="0" y1="0" x2="0" y2="1"><stop offset="0" stop-color="#b6b8b8"/><stop offset="0.14" stop-color="#9c9e9e"/><stop offset="0.3" stop-color="#5e5c5c"/><stop offset="0.42" stop-color="#2e2a2a"/><stop offset="1" stop-color="#242020"/></linearGradient>
 <filter id="vb"><feGaussianBlur stdDeviation="2"/></filter></defs>
 <rect width="122" height="162" fill="url(#al1)"/>
 <path d="M0 66 H60 V162 H0Z" fill="#2a1e20" opacity="0.85" filter="url(#vb)"/>
 <path d="M76 0 L92 0 L92 150 L70 150 L70 60Z" fill="#5e5a5c" opacity="0.75" filter="url(#vb)"/>
 <path d="M92 0 H122 V100 H92Z" fill="#e8eef0" filter="url(#vb)"/>
 <path d="M106 8 V98 M92 48 H122" stroke="#c4c8cc" stroke-width="1.5"/>
 <path d="M90 64 H99 V100 H90Z" fill="#d0d6d8" filter="url(#vb)"/>
 <path d="M94 88 H106 V98 H94Z" fill="#4a6a3a" filter="url(#vb)"/>
 <path d="M92 100 H122 V162 H92Z" fill="#545454" filter="url(#vb)"/>
 <path d="M0 110 C6 104 16 104 20 112 L20 126 L0 126Z" fill="#9a9696" opacity="0.7" filter="url(#vb)"/>
 <ellipse cx="16" cy="36" rx="12" ry="7" fill="#707070" opacity="0.7" filter="url(#vb)"/>
 <g filter="url(#vb)">
 <path d="M24 162 C26 120 40 92 58 88 L80 88 C96 92 104 120 108 162Z" fill="#262628"/>
 <path d="M46 90 C44 62 50 46 62 46 C74 46 80 62 80 90 L84 140 L74 140 L72 90 L54 90 L52 140 L42 140Z" fill="#3a2822"/>
 <ellipse cx="63" cy="73" rx="9" ry="13" fill="#7e5e54"/>
 </g>
 <path d="M58 125 h12 v4 h-12z" fill="#b06060" opacity="0.5"/>
 <path d="M0 136 H122 V162 H0Z" fill="#7a7e80" filter="url(#vb)"/>
 <path d="M80 134 H118 V156 H80Z" fill="#4a8088" filter="url(#vb)"/>
 <path d="M0 150 H60 V162 H0Z" fill="#9a9c9c" opacity="0.6"/>
</svg>
<div class="lb" style="left:1558px;top:322px;width:205px;height:29px"></div>
<svg class="a" style="left:1562px;top:325px" width="22" height="22" viewBox="0 0 22 22"><rect x="7" y="2" width="8" height="11" rx="4" fill="#e25050"/><path d="M4 10 C4 15 8 17 11 17 C14 17 18 15 18 10 M11 17 V20 M7 20 H15" stroke="#e25050" stroke-width="1.6" fill="none"/><path d="M2 21 L20 1" stroke="#e25050" stroke-width="1.8"/></svg>
<div class="nm" style="left:1591px;top:328px">Алёна Сенаторова</div>

<!-- tile 2 Liza -->
<div class="a" style="left:1558px;top:360px;width:288px;height:162px;background:#222"></div>
<svg class="a" style="left:1594px;top:360px" width="216" height="162" viewBox="0 0 216 162">
 <rect width="216" height="162" fill="#7ccbe0"/>
 <rect width="216" height="13" fill="#eaf0f2"/>
 <rect y="11" width="216" height="2" fill="#b8dce6"/>
 <path d="M196 13 L216 0 V162 H196Z" fill="#6cbcd2"/>
 <circle cx="38" cy="27" r="7" fill="#eef2f2" stroke="#aaa" stroke-width="1"/>
 <path d="M0 46 H17 V53 H0Z" fill="#c02222"/>
 <path d="M16 43 H54 V92 H20Z" fill="#101820"/>
 <path d="M24 60 C30 52 40 54 44 64 C40 72 30 72 24 60Z" fill="#8aa0b8" opacity="0.6"/>
 <path d="M12 80 H30 V95 H14Z" fill="#e8e4d0" opacity="0.8"/>
 <path d="M126 37 H204 V162 H130Z" fill="#c68644"/>
 <path d="M129 40 H201 V162 H132Z" fill="none" stroke="#a86a30" stroke-width="2"/>
 <g fill="#dfe1e0">
  <path d="M138 48 Q150 40 160 48 V73 H140Z"/><path d="M162 48 Q174 40 184 48 V73 H163Z"/>
  <rect x="140" y="75" width="20" height="22"/><rect x="163" y="75" width="21" height="22"/>
  <rect x="140" y="100" width="21" height="26"/><rect x="164" y="100" width="22" height="26"/>
 </g>
 <path d="M128 150 H216 V162 H128Z" fill="#e8d8c8"/>
 <g filter="url(#vb)">
 <path d="M0 162 L0 112 C15 98 40 92 62 92 L92 92 C115 94 132 100 139 116 L141 162Z" fill="#c41f1f"/>
 <path d="M38 128 C38 90 42 50 52 36 C62 26 86 26 96 36 C104 50 106 90 108 122 L94 122 L92 70 L62 70 L56 128Z" fill="#dccaae"/>
 <ellipse cx="77" cy="58" rx="15" ry="20" fill="#d6a48e"/>
 <path d="M66 74 h22 v20 h-22z" fill="#cc9a86"/>
 </g>
 <path d="M0 105 C5 100 10 100 12 110 L12 162 H0Z" fill="#e8d8d0" opacity="0.5"/>
</svg>
<div class="lb" style="left:1558px;top:493px;width:159px;height:29px"></div>
<svg class="a" style="left:1562px;top:496px" width="22" height="22" viewBox="0 0 22 22"><rect x="7" y="2" width="8" height="11" rx="4" fill="#e25050"/><path d="M4 10 C4 15 8 17 11 17 C14 17 18 15 18 10 M11 17 V20 M7 20 H15" stroke="#e25050" stroke-width="1.6" fill="none"/><path d="M2 21 L20 1" stroke="#e25050" stroke-width="1.8"/></svg>
<div class="nm" style="left:1591px;top:499px">Лиза Довбыш</div>

<!-- tile 3 Alexey (active) -->
<div class="a" style="left:1552px;top:525px;width:300px;height:174px;background:linear-gradient(90deg,#e8ee78,#f0f070 40%,#f0f070 60%,#e8ee78);"></div>
<div class="a" style="left:1552px;top:531px;width:300px;height:162px;background:linear-gradient(#e6ec74,#90e048 50%,#e6ec74)"></div>
<svg class="a" style="left:1558px;top:531px" width="288" height="162" viewBox="0 0 288 162">
 <defs><linearGradient id="wd" x1="0" y1="0" x2="1" y2="0"><stop offset="0" stop-color="#a8683a"/><stop offset="0.5" stop-color="#b87a44"/><stop offset="1" stop-color="#a66a3a"/></linearGradient></defs>
 <rect width="288" height="162" fill="url(#wd)"/>
 <g stroke="#8a4e26" stroke-width="1.2" opacity="0.6">
  <path d="M10 0V162M22 0V162M36 0V162M52 0V162M66 0V162M80 0V162M96 0V162M112 0V162M128 0V162M144 0V162M160 0V162M176 0V162M192 0V162M208 0V162M224 0V162M240 0V162M256 0V162M272 0V162"/>
 </g>
 <g stroke="#5e3a20" stroke-width="2.2">
 <rect x="1" y="28" width="28" height="45" fill="#cfdce0"/>
 <rect x="46" y="0" width="34" height="37" fill="#e4e8ec"/>
 <path d="M62 30 L80 18 V37 H62Z" fill="#c83a3a" stroke="none"/>
 <rect x="97" y="0" width="50" height="10" fill="#d8eaf0"/>
 <rect x="94" y="19" width="36" height="49" fill="#dce6f0"/>
 <rect x="24" y="80" width="50" height="38" fill="#d4dede"/>
 <rect x="95" y="78" width="50" height="39" fill="#d8e2e8"/>
 <rect x="165" y="0" width="68" height="20" fill="#b8a870"/>
 <rect x="199" y="31" width="28" height="36" fill="#a8d8ec"/>
 <rect x="197" y="78" width="35" height="38" fill="#d4e2e6"/>
 <rect x="265" y="5" width="23" height="53" fill="#dceef4"/>
 <rect x="255" y="75" width="33" height="39" fill="#f0f0f0"/>
 </g>
 <g filter="url(#vb)">
 <path d="M100 162 C115 130 150 120 170 118 C200 118 240 128 270 162Z" fill="#3b4a52"/>
 <path d="M152 110 h36 v20 h-36z" fill="#b88070"/>
 <ellipse cx="169" cy="88" rx="32" ry="40" fill="#c89480"/>
 <path d="M134 70 C132 40 150 22 172 22 C198 22 210 40 208 75 L200 70 C198 55 190 48 172 50 C150 50 142 58 140 78Z" fill="#2a2220"/>
 </g>
</svg>
<div class="lb" style="left:1558px;top:664px;width:222px;height:29px"></div>
<div class="nm" style="left:1564px;top:670px">Алексей Александрович</div>

<!-- tile 4 Ulyana -->
<div class="a" style="left:1558px;top:702px;width:288px;height:162px;background:#222"></div>
<svg class="a" style="left:1558px;top:702px" width="288" height="162" viewBox="0 0 288 162">
 <rect width="288" height="162" fill="#e9e4e0"/>
 <path d="M135 0 H288 V162 H135Z" fill="#5e4c3c"/>
 <path d="M200 0 H288 V70 H200Z" fill="#7a6a58"/>
 <path d="M150 0 V162 M170 0 V120 M190 0 V120" stroke="#3a2e24" stroke-width="2"/>
 <path d="M0 0 H6 V45 H0Z" fill="#9a9a90"/>
 <rect x="56" y="1" width="44" height="42" fill="#3a3a2c"/>
 <rect x="62" y="8" width="32" height="28" fill="#6a7a6a"/>
 <path d="M230 40 l4 -8 4 8 8 0 -6 6 3 8 -9 -4 -9 4 3 -8 -6 -6z" fill="#e8e8d8"/>
 <path d="M240 90 h48 v72 h-48z" fill="#4a3e34"/>
 <path d="M250 100 h14 v30 h-14z" fill="#e0e0d0"/>
 <path d="M268 98 h16 v30 h-16z" fill="#c04a6a"/>
 <path d="M242 135 h46 v27 h-46z" fill="#c8ccd0"/>
 <g filter="url(#vb)">
 <path d="M140 56 C150 50 220 50 236 64 L250 162 H150Z" fill="#2c2c30"/>
 <path d="M40 162 C50 132 90 116 130 112 C170 110 210 120 240 162Z" fill="#e2bcae"/>
 <path d="M78 40 C76 16 96 8 118 10 C140 12 156 30 152 64 C150 90 146 110 140 118 L130 118 L136 60 L96 60 L88 80Z" fill="#2e2424"/>
 <ellipse cx="112" cy="72" rx="27" ry="40" fill="#e8c4b4"/>
 <path d="M62 90 C70 84 84 86 88 100 L86 128 L64 128 C58 118 58 100 62 90Z" fill="#e4bcac"/>
 <path d="M0 140 C10 130 30 128 40 136 L36 162 H0Z" fill="#3a4a44" opacity="0.7"/>
 </g>
 <path d="M86 68 h22 M112 68 h22" stroke="#9a8a80" stroke-width="1.2"/>
</svg>
<div class="lb" style="left:1558px;top:834px;width:101px;height:30px"></div>
<svg class="a" style="left:1562px;top:838px" width="22" height="22" viewBox="0 0 22 22"><rect x="7" y="2" width="8" height="11" rx="4" fill="#e25050"/><path d="M4 10 C4 15 8 17 11 17 C14 17 18 15 18 10 M11 17 V20 M7 20 H15" stroke="#e25050" stroke-width="1.6" fill="none"/><path d="M2 21 L20 1" stroke="#e25050" stroke-width="1.8"/></svg>
<div class="nm" style="left:1591px;top:840px">Ульяна</div>

<div class="a" style="left:1647px;top:873px;width:109px;height:50px;border-radius:6px;background:#111"></div>
<svg class="a" style="left:1690px;top:890px" width="22" height="14" viewBox="0 0 22 14"><path d="M2 2 L11 11 L20 2" stroke="#999" stroke-width="2.2" fill="none"/></svg>


<!-- ============ BOTTOM TOOLBAR ============ -->

<style>
.tl{position:absolute;white-space:nowrap;line-height:1;font-size:17px;font-weight:bold;color:#bdbdbd;transform:translateX(-50%)}
.car{position:absolute;width:8px;height:8px;border-left:2px solid #bbb;border-top:2px solid #bbb;transform:rotate(45deg)}
</style>
<!-- mic -->
<svg class="a" style="left:58px;top:946px" width="40" height="40" viewBox="0 0 40 40">
 <rect x="14" y="2" width="12" height="22" rx="6" fill="#adadad"/>
 <path d="M9.5 18 C9.5 26 14 29.5 20 29.5 C26 29.5 30.5 26 30.5 18" stroke="#adadad" stroke-width="2.4" fill="none"/>
 <path d="M20 29.5 V36 M14 37 H26" stroke="#adadad" stroke-width="2.4"/>
 <path d="M2 38.5 L36 3.5" stroke="#1a1a1a" stroke-width="5.5"/>
 <path d="M2 38.5 L36 3.5" stroke="#e0505a" stroke-width="2.2"/>
</svg>
<div class="tl" style="left:78px;top:994px">Включить звук</div>
<div class="car" style="left:129px;top:964px"></div>
<!-- video -->
<svg class="a" style="left:222px;top:946px" width="42" height="40" viewBox="0 0 42 40">
 <rect x="2" y="10" width="26" height="21" rx="4" fill="#adadad"/>
 <path d="M28 17 L38 10.5 V29.5 L28 23Z" fill="#adadad"/>
 <path d="M3 38.5 L37 4.5" stroke="#1a1a1a" stroke-width="5.5"/>
 <path d="M3 38.5 L37 4.5" stroke="#e0505a" stroke-width="2.2"/>
</svg>
<div class="tl" style="left:242px;top:994px">Включить видео</div>
<div class="car" style="left:310px;top:964px"></div>
<!-- security -->
<svg class="a" style="left:499px;top:950px" width="30" height="32" viewBox="0 0 30 32">
 <path d="M15 1 L28 6 V15 C28 23 22 29 15 31 C8 29 2 23 2 15 V6Z" fill="#adadad"/>
 <path d="M15 4 L25.5 8 V15 H15Z M15 15 V28 C9.5 26 4.5 21.5 4.5 15Z" fill="#1a1a1a"/>
</svg>
<div class="tl" style="left:514px;top:994px">Безопасность</div>
<!-- participants -->
<svg class="a" style="left:661px;top:952px" width="40" height="30" viewBox="0 0 40 30">
 <circle cx="14" cy="7" r="6.5" fill="#a9a9a9"/>
 <path d="M1 27 C1 18 7 15 14 15 C21 15 27 18 27 27 Z" fill="#a9a9a9"/>
 <circle cx="28" cy="9" r="5.5" fill="#a9a9a9"/>
 <path d="M26 27 H39 C39 20 35 17 29 17 C27 17 25 17.5 24 18.5 C27 21 27 24 26 27Z" fill="#a9a9a9"/>
</svg>
<div class="t" style="left:706px;top:956px;font-size:18px;font-weight:bold;color:#bdbdbd">8</div>
<div class="tl" style="left:681px;top:994px">Участники</div>
<div class="car" style="left:756px;top:963px"></div>
<!-- chat -->
<svg class="a" style="left:823px;top:951px" width="33" height="31" viewBox="0 0 33 31">
 <path d="M7 1 H26 C30 1 32 3 32 7 V18 C32 22 30 24 26 24 H14 L8 30 V24 H7 C3 24 1 22 1 18 V7 C1 3 3 1 7 1Z" fill="#a9a9a9"/>
</svg>
<div class="tl" style="left:838px;top:994px">Чат</div>
<!-- share -->
<div class="a" style="left:987px;top:952px;width:36px;height:28px;border-radius:5px;background:#2ecc57"></div>
<svg class="a" style="left:995px;top:955px" width="20" height="22" viewBox="0 0 20 22"><path d="M10 18 V5 M4 10 L10 4 L16 10" stroke="#0d2a12" stroke-width="2.6" fill="none"/></svg>
<div class="tl" style="left:1004px;top:994px;color:#35cc66">Демонстрация экрана</div>
<div class="car" style="left:1088px;top:963px"></div>
<!-- record -->
<div class="a" style="left:1197px;top:948px;width:30px;height:30px;border-radius:4px;background:#b4b4b4"></div>
<div class="a" style="left:1206px;top:956px;width:4px;height:13px;background:#1a1a1a"></div>
<div class="a" style="left:1214px;top:956px;width:4px;height:13px;background:#1a1a1a"></div>
<div class="a" style="left:1234px;top:948px;width:30px;height:30px;border-radius:4px;background:#b4b4b4"></div>
<div class="a" style="left:1243px;top:957px;width:12px;height:12px;border-radius:1px;background:#1a1a1a"></div>
<div class="tl" style="left:1230px;top:996px">Пауза/остановить запись</div>
<!-- reactions -->
<svg class="a" style="left:1394px;top:948px" width="36" height="34" viewBox="0 0 36 34">
 <circle cx="16" cy="18" r="14.5" fill="#a9a9a9"/>
 <circle cx="11" cy="15" r="2" fill="#1a1a1a"/><circle cx="21" cy="15" r="2" fill="#1a1a1a"/>
 <path d="M9 21 C12 25 20 25 23 21" stroke="#1a1a1a" stroke-width="2.2" fill="none"/>
 <circle cx="28" cy="7" r="7" fill="#1a1a1a"/>
 <path d="M28 2 V12 M23 7 H33" stroke="#a9a9a9" stroke-width="2.2"/>
</svg>
<div class="tl" style="left:1409px;top:994px">Реакции</div>
<!-- apps -->
<svg class="a" style="left:1523px;top:953px" width="30" height="29" viewBox="0 0 30 29" fill="none" stroke="#a9a9a9" stroke-width="2.4">
 <path d="M2 16 V8 C2 5 4 3 7 3 H13"/>
 <path d="M27 13 V21 C27 24 25 26 22 26 H16"/>
 <circle cx="23" cy="6" r="3.6"/>
 <circle cx="6" cy="23" r="3.6"/>
</svg>
<div class="tl" style="left:1537px;top:994px">Приложения</div>
<!-- end -->
<div class="a" style="left:1758px;top:959px;width:144px;height:41px;border-radius:8px;background:#b72428"></div>
<div class="t" style="left:1830px;top:971px;font-size:17px;font-weight:bold;color:#fff;transform:translateX(-50%)">Завершение</div>


<!-- ============ TASKBAR ============ -->

<div class="a" style="left:0;top:1020px;width:1920px;height:60px;background:linear-gradient(90deg,#cce7ec,#c9e0e4 50%,#cde8eb)"></div>
<div class="a" style="left:1912px;top:1020px;width:2px;height:60px;background:#9cb6ba"></div>
<svg class="a" style="left:24px;top:1038px" width="25" height="24" viewBox="0 0 25 24" fill="#111">
 <path d="M0 3.4 L10.2 2 V11.3 H0Z M11.5 1.8 L25 0 V11.3 H11.5Z M0 12.6 H10.2 V22 L0 20.6Z M11.5 12.6 H25 V24 L11.5 22.2Z"/>
</svg>
<div class="a" style="left:73px;top:1022px;width:513px;height:58px;background:#fff;border:1px solid #c8d4da;border-bottom:none"></div>
<svg class="a" style="left:89px;top:1040px" width="26" height="24" viewBox="0 0 26 24" fill="none" stroke="#111" stroke-width="1.8">
 <circle cx="16" cy="9" r="7"/><path d="M11 14 L2 23"/>
</svg>
<div class="t" style="left:133px;top:1041px;font-size:21.9px;color:#2a2a2a">Введите здесь текст для поиска</div>
<div class="a" style="left:613px;top:1039px;width:22px;height:22px;border-radius:50%;border:3px solid #111"></div>
<svg class="a" style="left:682px;top:1037px" width="28" height="26" viewBox="0 0 28 26" fill="none" stroke="#111" stroke-width="1.6">
 <path d="M1 2 H17 M1 23 H17"/><rect x="3" y="6" width="12" height="13"/><path d="M23 1 V25" stroke-dasharray="4 2"/><rect x="21.5" y="10" width="3" height="5" fill="#111"/>
</svg>
<svg class="a" style="left:756px;top:1036px" width="34" height="29" viewBox="0 0 34 29">
 <path d="M1 3 C1 1.5 2 1 3 1 H12 L15 4 H31 C32 4 33 5 33 6 V27 C33 28 32 28.5 31 28.5 H3 C2 28.5 1 28 1 27Z" fill="#f2c540"/>
 <path d="M1 9 H33 V27 C33 28 32 28.5 31 28.5 H3 C2 28.5 1 28 1 27Z" fill="#ffd865"/>
 <rect x="11" y="16" width="12" height="12" fill="#2a7ad0"/>
 <rect x="14" y="20" width="6" height="8" fill="#ffd865"/>
</svg>
<svg class="a" style="left:829px;top:1032px" width="36" height="34" viewBox="0 0 36 34">
 <rect x="1" y="1" width="32" height="32" fill="#fff" stroke="#4a80c8"/>
 <rect x="1" y="1" width="32" height="32" fill="url(#wg)" opacity="0.4"/>
 <defs><linearGradient id="wg" x1="0" y1="0" x2="1" y2="1"><stop offset="0" stop-color="#e8f0ff"/><stop offset="1" stop-color="#8ab0e0"/></linearGradient></defs>
 <text x="2" y="24" font-family="Liberation Sans" font-weight="bold" font-size="24" fill="#1a4ab0">W</text>
 <path d="M20 22 L34 16 L35 32 L22 32Z" fill="#f4f8fc" stroke="#8aa0c0" stroke-width="0.8"/>
</svg>
<div class="a" style="left:818px;top:1077px;width:61px;height:3px;background:#2f7bd4"></div>
<div class="a" style="left:887px;top:1020px;width:67px;height:60px;background:rgba(255,255,255,0.38)"></div>
<div class="a" style="left:887px;top:1077px;width:67px;height:3px;background:#2f7bd4"></div>
<div class="a" style="left:905px;top:1033px;width:35px;height:33px;border-radius:10px;background:#3c8ef5"></div>
<svg class="a" style="left:910px;top:1042px" width="25" height="15" viewBox="0 0 25 15"><rect x="0" y="1" width="16" height="13" rx="3" fill="#fff"/><path d="M16.5 6 L24 1.5 V13.5 L16.5 9Z" fill="#fff"/></svg>
<!-- tray -->
<svg class="a" style="left:1296px;top:1043px" width="20" height="12" viewBox="0 0 20 12"><path d="M1 11 L10 2 L19 11" stroke="#111" stroke-width="1.5" fill="none"/></svg>
<svg class="a" style="left:1345px;top:1039px" width="20" height="24" viewBox="0 0 20 24" fill="none" stroke="#111" stroke-width="1.4">
 <rect x="2" y="8" width="10" height="10" rx="1"/><path d="M12 11 L17 8 V18 L12 15"/>
 <path d="M3 4 C6 1 14 1 17 4 M3 22 C6 24 14 24 17 22" stroke-width="1"/>
</svg>
<svg class="a" style="left:1389px;top:1041px" width="26" height="18" viewBox="0 0 26 18">
 <path d="M6 17 C2 17 1 14 1 12.5 C1 10 3 8.5 5.5 8.5 C6 4 9 1.5 13 1.5 C17 1.5 19.5 4 20 7 C23 7 25 9.5 25 12.5 C25 15 23 17 20.5 17Z" fill="#111"/>
 <path d="M8 15.5 C5 15.5 3 14 3 12.5 C3 11 4.5 10 7 10 C7.5 6 10 3.5 13 3.5 C16 3.5 18 6 18.5 8.5" fill="#a8b0b4"/>
</svg>
<svg class="a" style="left:1441px;top:1037px" width="16" height="26" viewBox="0 0 16 26">
 <rect x="3" y="0" width="10" height="17" rx="5" fill="#111"/>
 <path d="M1 13 C1 18 4 20 8 20 C12 20 15 18 15 13 M8 20 V24 M4 25 H12" stroke="#111" stroke-width="1.4" fill="none"/>
</svg>
<svg class="a" style="left:1484px;top:1039px" width="28" height="20" viewBox="0 0 28 20">
 <path d="M3 1 V5 M7 1 V5 M1 5 H9 V8 C9 10 7 11 5 11 C3 11 1 10 1 8Z M5 11 V16 H10" stroke="#111" stroke-width="1.4" fill="none"/>
 <rect x="10" y="6" width="16" height="11" fill="none" stroke="#111" stroke-width="1.4"/>
 <rect x="11.5" y="7.5" width="13" height="8" fill="#111"/>
 <rect x="26" y="9.5" width="2" height="4" fill="#111"/>
</svg>
<svg class="a" style="left:1537px;top:1040px" width="22" height="22" viewBox="0 0 22 22" fill="none" stroke="#111" stroke-width="1.4">
 <path d="M1 21 C1 10 10 1 21 1"/><path d="M5 21 C5 13 12 5 20 5"/><path d="M9 21 C9 15 14 10 19 10"/><circle cx="17" cy="19" r="1.6" fill="#111" stroke="none"/>
</svg>
<svg class="a" style="left:1581px;top:1040px" width="24" height="19" viewBox="0 0 24 19" fill="none" stroke="#111" stroke-width="1.4">
 <path d="M1 6 H5 L11 1 V18 L5 13 H1Z"/><path d="M15 6 L22 13 M22 6 L15 13"/>
</svg>
<svg class="a" style="left:1636px;top:1039px" width="24" height="24" viewBox="0 0 24 24" fill="none" stroke="#111" stroke-width="1.4">
 <path d="M4 20 L2 23 L5 22 L19 6 L17 4Z"/><path d="M15 6 L18 9 M17 4 C19 2 22 4 20 6" /><path d="M6 17 C10 16 14 18 20 15"/>
</svg>
<div class="t" style="left:1690px;top:1043px;font-size:15px;color:#111">РУС</div>
<div class="t" style="left:1786px;top:1029px;font-size:17px;color:#111;transform:translateX(-50%)">13:30</div>
<div class="t" style="left:1786px;top:1057px;font-size:17.4px;color:#111;transform:translateX(-50%)">20.03.2022</div>
<svg class="a" style="left:1857px;top:1038px" width="26" height="25" viewBox="0 0 26 25" fill="none" stroke="#111" stroke-width="1.5">
 <path d="M1 1 H25 V18 H16 L13 23 L10 18 H1Z"/>
</svg>

</body></html>
